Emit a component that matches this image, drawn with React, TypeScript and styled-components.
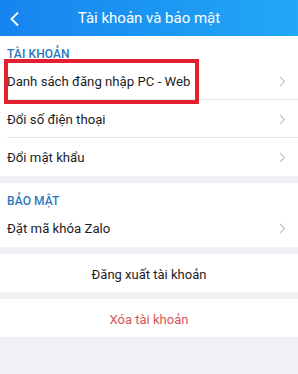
import styled, { createGlobalStyle } from "styled-components";

const GlobalStyle = createGlobalStyle`
  html, body {
    margin: 0;
    padding: 0;
    background: #f0f1f4;
  }
  body {
    font-family: Roboto, "Noto Sans", "Liberation Sans", sans-serif;
    -webkit-font-smoothing: antialiased;
  }
`;

const Screen = styled.div`
  width: 298px;
  height: 374px;
  background: #f0f1f4;
  overflow: hidden;
`;

const Header = styled.header`
  height: 36px;
  display: flex;
  align-items: center;
  justify-content: center;
  position: relative;
  background: linear-gradient(90deg, #1684ee 0%, #1c97f3 55%, #22a8f6 100%);
  color: #fff;
  font-size: 15px;
`;

const BackButton = styled.button`
  position: absolute;
  left: 9px;
  top: 11px;
  padding: 0;
  border: none;
  background: none;
  display: flex;
`;

const Section = styled.section`
  background: #fff;
  margin-bottom: 7px;
`;

const SectionLabel = styled.div`
  height: 26px;
  padding: 0 7px 1px;
  display: flex;
  align-items: flex-end;
  box-sizing: border-box;
  color: #2b79bd;
  font-size: 12px;
  font-weight: 500;
  letter-spacing: 0.1px;
`;

const Row = styled.div<{ $last?: boolean }>`
  height: 38px;
  margin-left: 7px;
  padding-right: 12px;
  display: flex;
  align-items: center;
  justify-content: space-between;
  border-bottom: ${(p) => (p.$last ? "none" : "1px solid #e8e9ec")};
  color: #1d1d1f;
  font-size: 13.2px;
  padding-top: 1px;
  box-sizing: border-box;
  position: relative;
`;

const Highlight = styled.span`
  position: absolute;
  left: -3px;
  top: -3px;
  width: 195px;
  height: 45px;
  border: 4px solid #e3202f;
  box-sizing: border-box;
  pointer-events: none;
`;

const ActionButton = styled.button<{ $danger?: boolean }>`
  display: block;
  width: 100%;
  height: 38px;
  border: none;
  background: #fff;
  margin-bottom: 7px;
  padding: 2px 0 0;
  font-family: inherit;
  font-size: 13px;
  color: ${(p) => (p.$danger ? "#d5555a" : "#1d1d1f")};
`;

const Chevron = () => (
  <svg width="7" height="11" viewBox="0 0 7 11" fill="none">
    <path d="M1 1l4.5 4.5L1 10" stroke="#c2c4c8" strokeWidth="1.2" />
  </svg>
);

export default function App() {
  return (
    <Screen>
      <GlobalStyle />
      <Header>
        <BackButton aria-label="Quay lại">
          <svg width="12" height="16" viewBox="0 0 12 16" fill="none">
            <path d="M9 1.5L2.5 8 9 14.5" stroke="#fff" strokeWidth="1.8" />
          </svg>
        </BackButton>
        Tài khoản và bảo mật
      </Header>

      <Section>
        <SectionLabel>TÀI KHOẢN</SectionLabel>
        <Row>
          Danh sách đăng nhập PC - Web
          <Chevron />
          <Highlight />
        </Row>
        <Row>
          Đổi số điện thoại
          <Chevron />
        </Row>
        <Row $last>
          Đổi mật khẩu
          <Chevron />
        </Row>
      </Section>

      <Section>
        <SectionLabel>BẢO MẬT</SectionLabel>
        <Row $last>
          Đặt mã khóa Zalo
          <Chevron />
        </Row>
      </Section>

      <ActionButton>Đăng xuất tài khoản</ActionButton>
      <ActionButton $danger>Xóa tài khoản</ActionButton>
    </Screen>
  );
}
